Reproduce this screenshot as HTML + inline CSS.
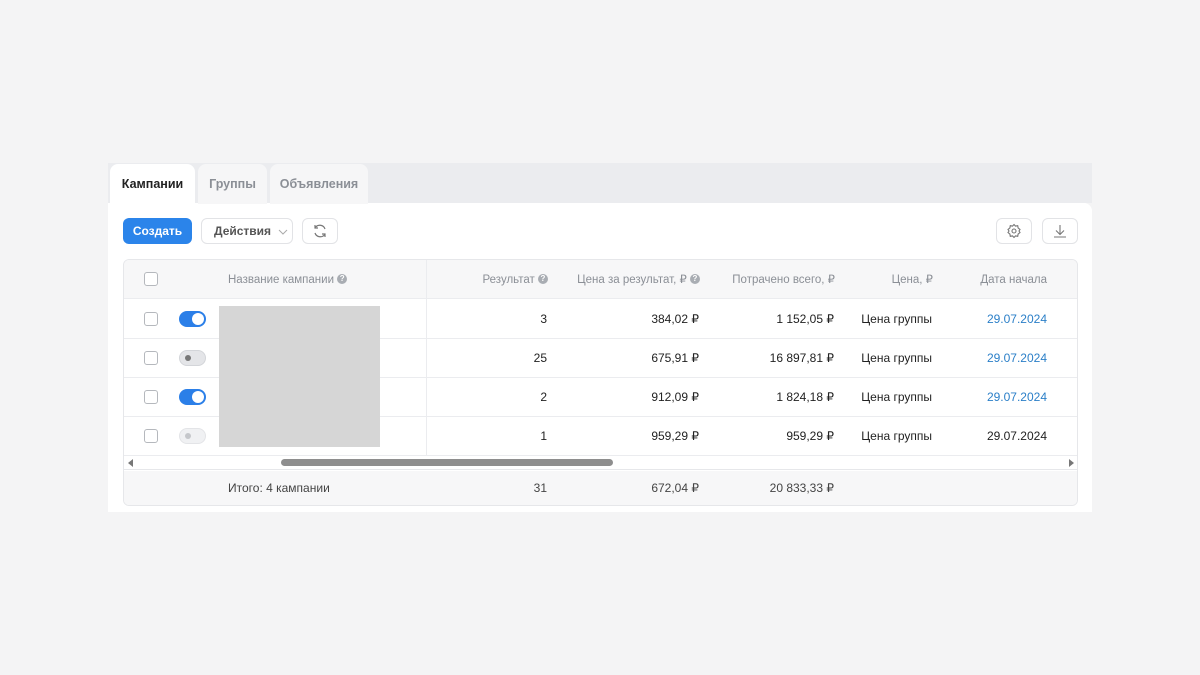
<!DOCTYPE html>
<html><head><meta charset="utf-8"><style>
*{box-sizing:border-box;margin:0;padding:0}
body{width:1200px;height:675px;background:#f4f4f5;font-family:"Liberation Sans",sans-serif;position:relative;overflow:hidden;font-size:12px;color:#222}
.abs{position:absolute}
.strip{left:108px;top:163px;width:984px;height:40px;background:#ebecef}
.card{left:108px;top:203px;width:984px;height:309px;background:#fff;border-radius:0 8px 0 0}
.tab{top:164px;height:40px;border-radius:8px 8px 0 0;background:#f6f6f7;font-size:12.5px;font-weight:bold;color:#8b8f96;line-height:40px;text-align:center}
.btn{top:218px;height:26px;border:1px solid #e2e3e6;border-radius:6px;background:#fff}
.tbl{left:123px;top:259px;width:955px;height:247px;border:1px solid #e6e7ea;border-radius:6px;background:#fff;overflow:hidden}
.row{position:absolute;left:0;width:955px;border-bottom:1px solid #ebecef}
.cb{position:absolute;left:20px;width:14px;height:14px;border:1px solid #b5b8bd;border-radius:3px;background:#fff}
.tg{position:absolute;left:55px;width:27px;height:16px;border-radius:8px}
.tg.on{background:#2b7fe8}.tg.on::after{content:"";position:absolute;right:2px;top:2px;width:12px;height:12px;border-radius:50%;background:#fff}
.tg.off{background:#e4e5e8;border:1px solid #d3d5d9}.tg.off::after{content:"";position:absolute;left:5px;top:4px;width:6px;height:6px;border-radius:50%;background:#777}
.tg.dis{background:#f0f1f3;border:1px solid #e3e4e7}.tg.dis::after{content:"";position:absolute;left:5px;top:4px;width:6px;height:6px;border-radius:50%;background:#c5c7cb}
.c{position:absolute;text-align:right;font-size:12px;line-height:14px;white-space:nowrap}
.h{color:#8b8f96;font-size:11.5px;top:13px}
.q{display:inline-block;width:10px;height:10px;border-radius:50%;background:#a9adb3;color:#fff;font-size:8px;line-height:10px;text-align:center;font-weight:bold;vertical-align:middle;margin-top:-2px}
.blue{color:#2b7fc8}
</style></head><body>
<div class="abs strip"></div>
<div class="abs card"></div>
<div class="abs tab" style="left:110px;width:85px;background:#fff;color:#222">Кампании</div>
<div class="abs tab" style="left:198px;width:69px">Группы</div>
<div class="abs tab" style="left:270px;width:98px">Объявления</div>
<div class="abs" style="left:123px;top:218px;width:69px;height:26px;border-radius:6px;background:#2b84ea;color:#fff;font-weight:bold;font-size:12px;line-height:26px;text-align:center">Создать</div>
<div class="abs btn" style="left:201px;width:92px;font-size:12px;font-weight:bold;color:#555;line-height:24px;padding-left:12px">Действия <svg width="10" height="6" style="margin-left:4px" viewBox="0 0 10 6"><path d="M1 1l4 4 4-4" fill="none" stroke="#aaa" stroke-width="1"/></svg></div>
<div class="abs btn" style="left:302px;width:36px"><svg width="16" height="16" style="margin:4px 9px" viewBox="0 0 16 16"><path d="M13 6A5.5 5.5 0 0 0 3 5M3 10a5.5 5.5 0 0 0 10 1M3 2v3h3M13 14v-3h-3" fill="none" stroke="#777" stroke-width="1.2"/></svg></div>
<div class="abs btn" style="left:996px;width:36px"><svg width="16" height="16" style="margin:4px 9px" viewBox="0 0 16 16"><circle cx="8" cy="8" r="2" fill="none" stroke="#777" stroke-width="1.1"/><path d="M8 1.5l1.5 1.6 2.2-.4.4 2.2L14 6.5 13 8l1 1.5-1.9 1.6-.4 2.2-2.2-.4L8 14.5 6.5 12.9l-2.2.4-.4-2.2L2 9.5 3 8 2 6.5l1.9-1.6.4-2.2 2.2.4z" fill="none" stroke="#777" stroke-width="1.1"/></svg></div>
<div class="abs btn" style="left:1042px;width:36px"><svg width="16" height="16" style="margin:4px 9px" viewBox="0 0 16 16"><path d="M8 2v9M4 7.5l4 4 4-4M2 14h12" fill="none" stroke="#777" stroke-width="1.1"/></svg></div>

<div class="abs tbl">
 <div class="row" style="top:0;height:39px;background:#f7f7f8"></div>
 <div class="row" style="top:39px;height:40px"></div>
 <div class="row" style="top:79px;height:39px"></div>
 <div class="row" style="top:118px;height:39px"></div>
 <div class="row" style="top:157px;height:39px"></div>
 <div style="position:absolute;left:302px;top:0;width:1px;height:196px;background:#ebecef"></div>
 <div style="position:absolute;left:95px;top:46px;width:161px;height:141px;background:#d6d6d6"></div>
 <div class="cb" style="top:12px"></div>
 <div class="c h" style="left:104px;text-align:left">Название кампании <span class="q">?</span></div>
 <div class="c h" style="left:330px;width:94px">Результат <span class="q">?</span></div>
 <div class="c h" style="left:440px;width:136px">Цена за результат, ₽ <span class="q">?</span></div>
 <div class="c h" style="left:590px;width:121px">Потрачено всего, ₽</div>
 <div class="c h" style="left:720px;width:89px">Цена, ₽</div>
 <div class="c h" style="left:830px;width:93px">Дата начала</div>
 <div class="cb" style="top:52px"></div><div class="tg on" style="top:51px"></div>
 <div class="c" style="left:330px;width:93px;top:52px">3</div><div class="c" style="left:440px;width:135px;top:52px">384,02 ₽</div><div class="c" style="left:590px;width:120px;top:52px">1 152,05 ₽</div><div class="c" style="left:720px;width:88px;top:52px">Цена группы</div><div class="c blue" style="left:830px;width:93px;top:52px">29.07.2024</div>
 <div class="cb" style="top:91px"></div><div class="tg off" style="top:90px"></div>
 <div class="c" style="left:330px;width:93px;top:91px">25</div><div class="c" style="left:440px;width:135px;top:91px">675,91 ₽</div><div class="c" style="left:590px;width:120px;top:91px">16 897,81 ₽</div><div class="c" style="left:720px;width:88px;top:91px">Цена группы</div><div class="c blue" style="left:830px;width:93px;top:91px">29.07.2024</div>
 <div class="cb" style="top:130px"></div><div class="tg on" style="top:129px"></div>
 <div class="c" style="left:330px;width:93px;top:130px">2</div><div class="c" style="left:440px;width:135px;top:130px">912,09 ₽</div><div class="c" style="left:590px;width:120px;top:130px">1 824,18 ₽</div><div class="c" style="left:720px;width:88px;top:130px">Цена группы</div><div class="c blue" style="left:830px;width:93px;top:130px">29.07.2024</div>
 <div class="cb" style="top:169px"></div><div class="tg dis" style="top:168px"></div>
 <div class="c" style="left:330px;width:93px;top:169px">1</div><div class="c" style="left:440px;width:135px;top:169px">959,29 ₽</div><div class="c" style="left:590px;width:120px;top:169px">959,29 ₽</div><div class="c" style="left:720px;width:88px;top:169px">Цена группы</div><div class="c" style="left:830px;width:93px;top:169px">29.07.2024</div>
 <div style="position:absolute;left:0;top:196px;width:955px;height:14px;background:#fff;border-bottom:1px solid #e6e7ea"></div>
 <div style="position:absolute;left:4px;top:199px;width:0;height:0;border:4px solid transparent;border-right:5px solid #777;border-left:0"></div>
 <div style="position:absolute;right:3px;top:199px;width:0;height:0;border:4px solid transparent;border-left:5px solid #777;border-right:0"></div>
 <div style="position:absolute;left:157px;top:199px;width:332px;height:7px;border-radius:4px;background:#8e8e8e"></div>
 <div style="position:absolute;left:0;top:211px;width:955px;height:36px;background:#f7f7f8"></div>
 <div class="c" style="left:104px;top:221px;text-align:left;color:#444">Итого: 4 кампании</div>
 <div class="c" style="left:330px;width:93px;top:221px;color:#444">31</div><div class="c" style="left:440px;width:135px;top:221px;color:#444">672,04 ₽</div><div class="c" style="left:590px;width:120px;top:221px;color:#444">20 833,33 ₽</div>
</div>
</body></html>
